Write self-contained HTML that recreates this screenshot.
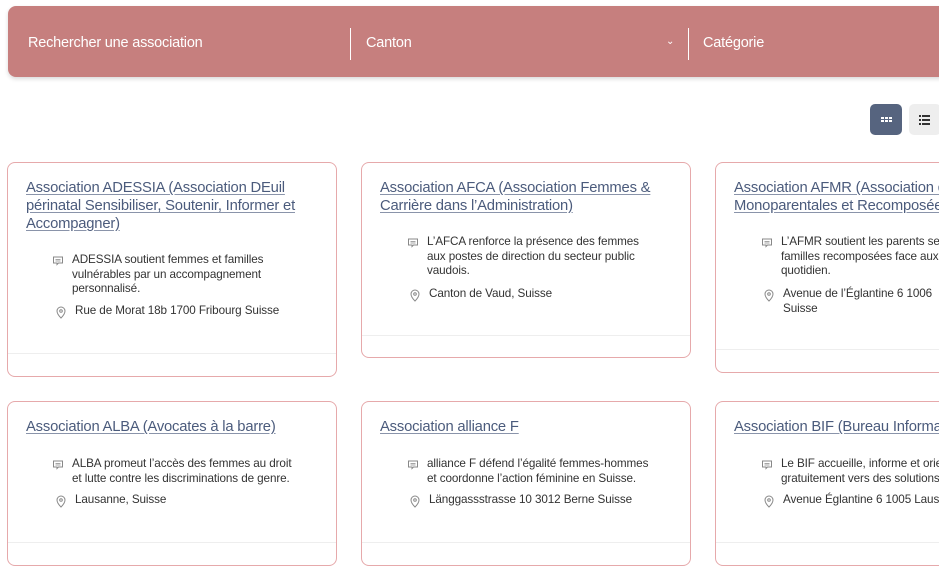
<!DOCTYPE html>
<html><head><meta charset="utf-8"><style>
body{margin:0;width:939px;height:574px;overflow:hidden;background:#fff;font-family:"Liberation Sans",sans-serif;position:relative}
.bar{position:absolute;left:8px;top:6px;width:945px;height:71px;background:#c67f7e;border-radius:8px;box-shadow:0 2px 4px rgba(0,0,0,.15)}
.bar span{position:absolute;top:29px;color:#fff;font-size:14.5px;letter-spacing:-.2px}
.sep{position:absolute;top:22px;width:1px;height:32px;background:#fff}
.btn{position:absolute;top:104px;width:32px;height:31px;border-radius:5px}
.card{position:absolute;width:330px;border:1px solid #e6a9ab;border-radius:8px;background:#fff;box-sizing:border-box}
.card h3{margin:0;position:absolute;left:18px;top:16px;right:10px;font-weight:normal;font-size:14.8px;line-height:18px;color:#4b5b7c;text-decoration:underline;text-decoration-color:#8a94aa;text-underline-offset:2px;letter-spacing:-.2px}
.row{position:absolute;font-size:11.7px;line-height:14.5px;color:#333;white-space:nowrap;letter-spacing:-.1px}
.ic{position:absolute;left:-20px;top:2px}
.foot{position:absolute;left:0;right:0;height:1px;background:#eee}
</style></head><body>
<div class="bar">
<span style="left:20px">Rechercher une association</span>
<div class="sep" style="left:342px"></div>
<span style="left:358px">Canton</span>
<span style="left:658px;top:30px;font-size:10px">&#8964;</span>
<div class="sep" style="left:680px"></div>
<span style="left:695px">Catégorie</span>
</div>
<div class="btn" style="left:870px;background:#56647f"><svg width="32" height="31"><g fill="#fff"><rect x="11" y="13" width="3" height="2"/><rect x="15" y="13" width="3" height="2"/><rect x="19" y="13" width="3" height="2"/><rect x="11" y="16" width="3" height="2"/><rect x="15" y="16" width="3" height="2"/><rect x="19" y="16" width="3" height="2"/></g></svg></div>
<div class="btn" style="left:909px;background:#eee"><svg width="32" height="31"><g fill="#333"><rect x="10" y="11" width="2" height="2"/><rect x="13" y="11" width="8" height="2"/><rect x="10" y="15" width="2" height="2"/><rect x="13" y="15" width="8" height="2"/><rect x="10" y="19" width="2" height="2"/><rect x="13" y="19" width="8" height="2"/></g></svg></div>

<div class="card" style="left:7px;top:162px;height:215px">
<h3>Association ADESSIA (Association DEuil périnatal Sensibiliser, Soutenir, Informer et Accompagner)</h3>
<div class="row" style="left:64px;top:90px"><svg class="ic" width="12" height="12" viewBox="0 0 12 12"><path d="M1.5 2h9v6h-4l-1.5 1.5v-1.5h-3.5z" fill="none" stroke="#888"/><path d="M3.5 4.5h5M3.5 6h5" stroke="#888" stroke-width=".8"/></svg>ADESSIA soutient femmes et familles<br>vulnérables par un accompagnement<br>personnalisé.</div>
<div class="row" style="left:67px;top:141px"><svg class="ic" width="12" height="13" viewBox="0 0 12 13"><path d="M6 12s-4-4-4-7a4 4 0 0 1 8 0c0 3-4 7-4 7z" fill="none" stroke="#888"/><circle cx="6" cy="5" r="1.3" fill="none" stroke="#888"/></svg>Rue de Morat 18b 1700 Fribourg Suisse</div>
<div class="foot" style="top:190px"></div>
</div>

<div class="card" style="left:361px;top:162px;height:196px">
<h3>Association AFCA (Association Femmes &amp; Carrière dans l’Administration)</h3>
<div class="row" style="left:65px;top:72px"><svg class="ic" width="12" height="12" viewBox="0 0 12 12"><path d="M1.5 2h9v6h-4l-1.5 1.5v-1.5h-3.5z" fill="none" stroke="#888"/><path d="M3.5 4.5h5M3.5 6h5" stroke="#888" stroke-width=".8"/></svg>L’AFCA renforce la présence des femmes<br>aux postes de direction du secteur public<br>vaudois.</div>
<div class="row" style="left:67px;top:124px"><svg class="ic" width="12" height="13" viewBox="0 0 12 13"><path d="M6 12s-4-4-4-7a4 4 0 0 1 8 0c0 3-4 7-4 7z" fill="none" stroke="#888"/><circle cx="6" cy="5" r="1.3" fill="none" stroke="#888"/></svg>Canton de Vaud, Suisse</div>
<div class="foot" style="top:172px"></div>
</div>

<div class="card" style="left:715px;top:162px;height:211px">
<h3 style="white-space:nowrap">Association AFMR (Association des<br>Monoparentales et Recomposées</h3>
<div class="row" style="left:65px;top:72px"><svg class="ic" width="12" height="12" viewBox="0 0 12 12"><path d="M1.5 2h9v6h-4l-1.5 1.5v-1.5h-3.5z" fill="none" stroke="#888"/><path d="M3.5 4.5h5M3.5 6h5" stroke="#888" stroke-width=".8"/></svg>L’AFMR soutient les parents seuls<br>familles recomposées face aux<br>quotidien.</div>
<div class="row" style="left:67px;top:124px"><svg class="ic" width="12" height="13" viewBox="0 0 12 13"><path d="M6 12s-4-4-4-7a4 4 0 0 1 8 0c0 3-4 7-4 7z" fill="none" stroke="#888"/><circle cx="6" cy="5" r="1.3" fill="none" stroke="#888"/></svg>Avenue de l’Églantine 6 1006<br>Suisse</div>
<div class="foot" style="top:186px"></div>
</div>

<div class="card" style="left:7px;top:401px;height:165px">
<h3>Association ALBA (Avocates à la barre)</h3>
<div class="row" style="left:64px;top:55px"><svg class="ic" width="12" height="12" viewBox="0 0 12 12"><path d="M1.5 2h9v6h-4l-1.5 1.5v-1.5h-3.5z" fill="none" stroke="#888"/><path d="M3.5 4.5h5M3.5 6h5" stroke="#888" stroke-width=".8"/></svg>ALBA promeut l’accès des femmes au droit<br>et lutte contre les discriminations de genre.</div>
<div class="row" style="left:67px;top:91px"><svg class="ic" width="12" height="13" viewBox="0 0 12 13"><path d="M6 12s-4-4-4-7a4 4 0 0 1 8 0c0 3-4 7-4 7z" fill="none" stroke="#888"/><circle cx="6" cy="5" r="1.3" fill="none" stroke="#888"/></svg>Lausanne, Suisse</div>
<div class="foot" style="top:140px"></div>
</div>

<div class="card" style="left:361px;top:401px;height:165px">
<h3>Association alliance F</h3>
<div class="row" style="left:65px;top:55px"><svg class="ic" width="12" height="12" viewBox="0 0 12 12"><path d="M1.5 2h9v6h-4l-1.5 1.5v-1.5h-3.5z" fill="none" stroke="#888"/><path d="M3.5 4.5h5M3.5 6h5" stroke="#888" stroke-width=".8"/></svg>alliance F défend l’égalité femmes-hommes<br>et coordonne l’action féminine en Suisse.</div>
<div class="row" style="left:67px;top:91px"><svg class="ic" width="12" height="13" viewBox="0 0 12 13"><path d="M6 12s-4-4-4-7a4 4 0 0 1 8 0c0 3-4 7-4 7z" fill="none" stroke="#888"/><circle cx="6" cy="5" r="1.3" fill="none" stroke="#888"/></svg>Länggassstrasse 10 3012 Berne Suisse</div>
<div class="foot" style="top:140px"></div>
</div>

<div class="card" style="left:715px;top:401px;height:165px">
<h3 style="white-space:nowrap">Association BIF (Bureau Information</h3>
<div class="row" style="left:65px;top:55px"><svg class="ic" width="12" height="12" viewBox="0 0 12 12"><path d="M1.5 2h9v6h-4l-1.5 1.5v-1.5h-3.5z" fill="none" stroke="#888"/><path d="M3.5 4.5h5M3.5 6h5" stroke="#888" stroke-width=".8"/></svg>Le BIF accueille, informe et oriente<br>gratuitement vers des solutions</div>
<div class="row" style="left:67px;top:91px"><svg class="ic" width="12" height="13" viewBox="0 0 12 13"><path d="M6 12s-4-4-4-7a4 4 0 0 1 8 0c0 3-4 7-4 7z" fill="none" stroke="#888"/><circle cx="6" cy="5" r="1.3" fill="none" stroke="#888"/></svg>Avenue Églantine 6 1005 Lausanne</div>
<div class="foot" style="top:140px"></div>
</div>
</body></html>
